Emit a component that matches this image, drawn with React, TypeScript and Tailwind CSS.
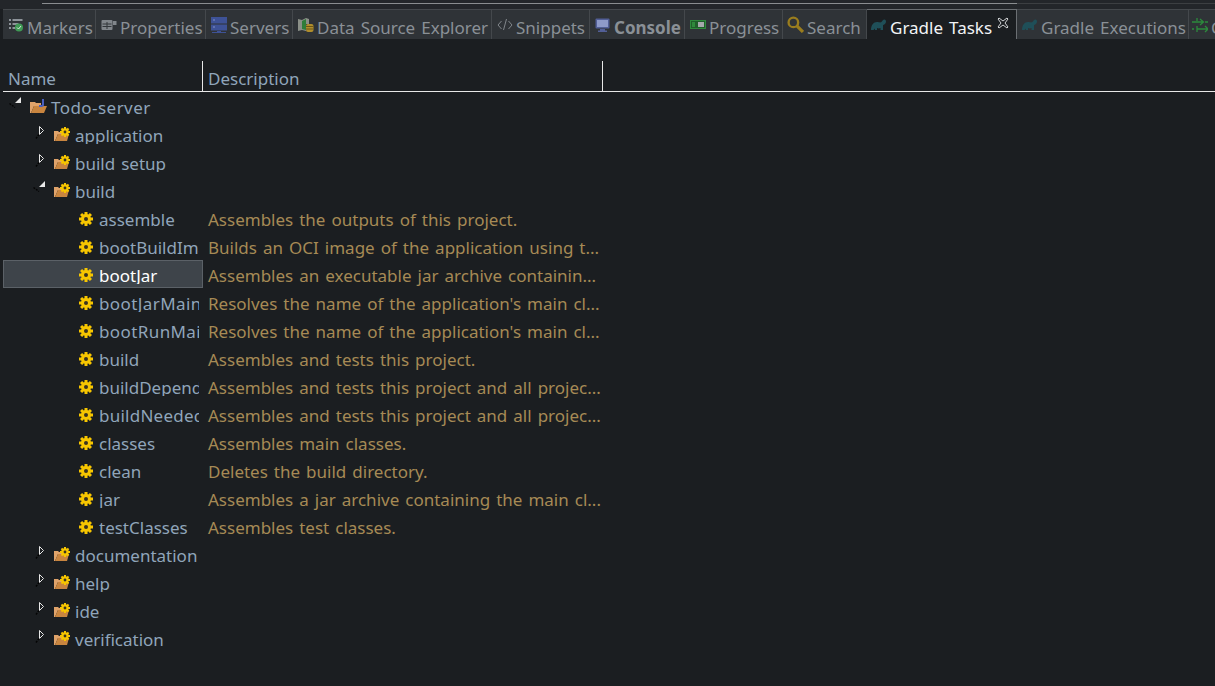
import React from "react";

const GRAY = "#8a9096";

function MarkersIcon() {
  return (
    <svg width="16" height="16" viewBox="0 0 16 16">
      <path d="M1 2h2v2H1zM1 6h2v2H1zM1 10h2v2H1z" fill="#8d9399" />
      <path d="M4.500 2h10v2h-10zM4.500 6h6v2h-6zM4.500 10h3v2h-3z" fill="#8d9399" />
      <circle cx="11" cy="10.500" r="4" fill="#3f9a55" />
      <path d="M9 10.500l1.500 1.500 2.500-3" stroke="#d8e8dc" strokeWidth="1" fill="none" />
    </svg>
  );
}

function PropertiesIcon() {
  return (
    <svg width="16" height="16" viewBox="0 0 16 16">
      <rect x="0.500" y="3" width="11" height="10" rx="1" fill="#81868b" />
      <path d="M1.500 7h9M6 5v7M1.500 9.500h9" stroke="#33373b" strokeWidth="1" />
      <path d="M12 4h3.500v4H12z" fill="#81868b" />
    </svg>
  );
}

function ServersIcon() {
  return (
    <svg width="16" height="16" viewBox="0 0 16 16">
      <rect x="0" y="0" width="16" height="6.500" fill="#3e5296" />
      <rect x="0" y="7.500" width="16" height="6" fill="#3e5296" />
      <path d="M2 3h2M2 10h2" stroke="#8090c8" strokeWidth="1" />
      <path d="M6 14h4v1h5v1H1v-1h5z" fill="#3e5296" />
    </svg>
  );
}

function DataSourceIcon() {
  return (
    <svg width="16" height="16" viewBox="0 0 16 16">
      <path d="M0 2l4 1 4-2 3 1v5H8v7l-4-1-4 1z" fill="#8b9088" />
      <path d="M4 4l4-2v11l-4-1z" fill="#2f7d3a" />
      <rect x="8" y="7" width="7.500" height="8" rx="2" fill="#b08e2c" />
      <path d="M8 9.500h7.500M8 12h7.500" stroke="#6b5518" strokeWidth="1" />
    </svg>
  );
}

function SnippetsIcon() {
  return (
    <svg width="16" height="14" viewBox="0 0 16 14" fill="none" stroke="#81868b" strokeWidth="1">
      <path d="M4.500 3L1 7l3.500 4M11.500 3L15 7l-3.500 4M9.500 1L6.500 12" />
    </svg>
  );
}

function ConsoleIcon() {
  return (
    <svg width="15" height="14" viewBox="0 0 15 14">
      <rect x="0.500" y="0.500" width="14" height="10" rx="1" fill="#525f97" />
      <rect x="2" y="2" width="11" height="7" fill="#8e9ac9" />
      <path d="M5 11h5v1.500h2V14H3v-1.500h2z" fill="#525f97" />
    </svg>
  );
}

function ProgressIcon() {
  return (
    <svg width="16" height="9" viewBox="0 0 16 9">
      <rect width="16" height="9" fill="#2f8a3c" />
      <rect x="1" y="1" width="14" height="7" fill="#1f5f2a" />
      <rect x="8" y="2" width="6" height="5" fill="#a5a8ab" />
      <rect x="2" y="2" width="3" height="5" fill="#2f8a3c" />
    </svg>
  );
}

function SearchIcon() {
  return (
    <svg width="17" height="17" viewBox="0 0 16 16" fill="none" stroke="#9a7d1e">
      <circle cx="6" cy="6" r="4.500" strokeWidth="2.200" />
      <path d="M9.500 9.500l5.500 5.500" strokeWidth="3" />
    </svg>
  );
}

function GradleIcon() {
  return (
    <svg width="15" height="12" viewBox="0 0 15 12" className="shrink-0">
      <path d="M0 11C0 6 2.500 3 6 3c2 0 3 1 4.500 0 .5-1 1.500-2.500 3-2.500 1 0 1.500 1 1.500 2 0 2-2 3.500-3 3.500v5H9.500V9c-1 .5-2.500.5-3.500 0v2H4V9.500L2.500 11z" fill="#1f4f58" />
    </svg>
  );
}

function ExecutionsIcon() {
  return (
    <svg width="16" height="16" viewBox="0 0 16 16" fill="none" stroke="#2c8a3c" strokeWidth="1.300" className="shrink-0">
      <path d="M0 5h11M8 2l3.500 3L8 8M16 5h-3M5 1v3M0 12h2M5 9v6M5 12h11M13 9l3 3-3 3" />
    </svg>
  );
}

function GearIcon({ size = 14 }: { size?: number }) {
  const teeth = [0, 45, 90, 135];
  return (
    <svg width={size} height={size} viewBox="0 0 14 14">
      {teeth.map((a) => (
        <rect key={a} x="5.500" y="0" width="3" height="14" fill="#f7c600" transform={`rotate(${a} 7 7)`} />
      ))}
      <circle cx="7" cy="7" r="5" fill="#f7c600" />
      <circle cx="7" cy="7" r="2" fill="#3a3320" />
    </svg>
  );
}

function ProjectFolder() {
  return (
    <svg width="17" height="15" viewBox="0 0 17 15" className="mb-[2px]">
      <path d="M0 3h5l1 1h5v3H4L1 14H0z" fill="#e0a36a" />
      <path d="M4 7h13l-3 7H1z" fill="#c9853f" />
      <path d="M12 0h2v6c0 1-1 2-2.500 2H9V6h3z" fill="#4a5fc0" />
    </svg>
  );
}

function GroupFolder() {
  return (
    <svg width="17" height="15" viewBox="0 0 17 15" className="mb-[2px]">
      <path d="M0 4h4l1 1h3v2H4l-3 7H0z" fill="#e0a36a" />
      <path d="M4 7h11l-2 7H1z" fill="#c9853f" />
      <g transform="translate(6 0)">
        <GearGroup />
      </g>
    </svg>
  );
}

function GearGroup() {
  return (
    <g>
      {[0, 45, 90, 135].map((a) => (
        <rect key={a} x="4" y="0" width="2" height="10" fill="#f7c600" transform={`rotate(${a} 5 5)`} />
      ))}
      <circle cx="5" cy="5" r="3.700" fill="#f7c600" />
      <circle cx="5" cy="5" r="1.400" fill="#3a3320" />
    </g>
  );
}

function Twisty({ open }: { open: boolean }) {
  if (open) {
    return (
      <svg width="12" height="11" viewBox="0 0 12 11" className="mb-[9px]">
        <path d="M12 0v6H6z" fill="#e8e8e8" />
        <path d="M0.500 6.500l5.500 4" stroke="#050505" strokeWidth="1.500" strokeDasharray="2 1" />
      </svg>
    );
  }
  return (
    <svg width="9" height="13" viewBox="0 0 9 13" className="mb-[5px]">
      <path d="M4.500 0.500l4 4-4 4z" fill="#1b1e21" stroke="#e8e8e8" />
      <path d="M4 8.500l-3 4" stroke="#050505" strokeWidth="1.500" strokeDasharray="2 1" />
    </svg>
  );
}

const tabs = [
  { label: "Markers", w: "w-[93px]", icon: <MarkersIcon /> },
  { label: "Properties", w: "w-[110px]", icon: <PropertiesIcon /> },
  { label: "Servers", w: "w-[87px]", icon: <ServersIcon /> },
  { label: "Data Source Explorer", w: "w-[199px]", icon: <DataSourceIcon /> },
  { label: "Snippets", w: "w-[98px]", icon: <SnippetsIcon /> },
  { label: "Console", w: "w-[95px]", icon: <ConsoleIcon />, bold: true },
  { label: "Progress", w: "w-[98px]", icon: <ProgressIcon /> },
  { label: "Search", w: "w-[84px]", icon: <SearchIcon /> },
];

const tasks = [
  ["assemble", "Assembles the outputs of this project.", ""],
  ["bootBuildImage", "Builds an OCI image of the application using t...", ""],
  ["bootJar", "Assembles an executable jar archive containin...", ""],
  ["bootJarMainClassName", "Resolves the name of the application's main cl...", "tracking-[0.4px]"],
  ["bootRunMainClassName", "Resolves the name of the application's main cl...", "tracking-[0.4px]"],
  ["build", "Assembles and tests this project.", ""],
  ["buildDependents", "Assembles and tests this project and all projec...", ""],
  ["buildNeeded", "Assembles and tests this project and all projec...", "tracking-[0.25px]"],
  ["classes", "Assembles main classes.", ""],
  ["clean", "Deletes the build directory.", ""],
  ["jar", "Assembles a jar archive containing the main cl...", ""],
  ["testClasses", "Assembles test classes.", ""],
];

function Group({ name, open = false }: { name: string; open?: boolean }) {
  return (
    <div className="flex h-7 items-center pt-[2px]">
      <div className="flex w-[200px] items-center overflow-hidden">
        <div className={open ? "flex w-[50px] justify-end pr-[8px]" : "flex w-[50px] justify-end pr-[9px]"}>
          <Twisty open={open} />
        </div>
        <div className="ml-[1px] flex w-[21px] shrink-0">
          <GroupFolder />
        </div>
        <span className="whitespace-nowrap">{name}</span>
      </div>
    </div>
  );
}

export default function App() {
  return (
    <div className="h-[686px] w-[1215px] overflow-hidden bg-[#1b1e21] pl-[3px] font-['Noto_Sans',sans-serif] text-[17px] leading-none text-[#90a5ba] [word-spacing:1.6px]">
      {/* top strip */}
      <div className="-ml-[3px] flex h-[9px] items-start bg-[#23262a] pt-[3px]">
        <div className="ml-[42px] h-px w-[975px] bg-[#8a8d90]" />
        <div className="h-px flex-1 bg-[#3c3f42]" />
      </div>

      {/* view tabs */}
      <div className="flex h-[30px] items-stretch border-t border-[#44484c] bg-[#2f3337]">
        {tabs.map((t) => (
          <div
            key={t.label}
            className={`flex ${t.w} shrink-0 items-center gap-[3px] border-r border-[#44484c] pl-[4px] whitespace-nowrap ${t.bold ? "font-bold" : ""}`}
            style={{ color: GRAY }}
          >
            <span className="flex w-[17px] shrink-0 items-center justify-center">{t.icon}</span>
            <span className="mt-[5px]">{t.label}</span>
          </div>
        ))}
        <div className="-mt-px flex w-[150px] shrink-0 items-center gap-[4px] border-t border-r border-[#6b6f73] bg-[#1b1e21] pl-[4px] whitespace-nowrap text-[#f2f4f6]">
          <GradleIcon />
          <span className="mt-[5px]">Gradle Tasks</span>
          <svg width="12" height="12" viewBox="0 0 12 12" className="-mt-1 ml-[1px]" fill="none" stroke="#d0d2d4">
            <path d="M2 1l4 3 4-3 1 1-3 4 3 4-1 1-4-3-4 3-1-1 3-4-3-4z" />
          </svg>
        </div>
        <div className="flex w-[172px] shrink-0 items-center gap-[4px] border-r border-[#44484c] pl-[5px] whitespace-nowrap" style={{ color: GRAY }}>
          <GradleIcon />
          <span className="mt-[5px]">Gradle Executions</span>
        </div>
        <div className="flex shrink-0 items-center gap-[3px] pl-[3px]" style={{ color: GRAY }}>
          <ExecutionsIcon />
          <span className="mt-[5px]">C</span>
        </div>
      </div>

      {/* column header */}
      <div className="mt-[22px] flex h-[31px] items-stretch border-b border-[#e8e8e8]">
        <div className="flex w-[200px] items-end border-r border-[#e8e8e8] pb-[4px] pl-[5px]">Name</div>
        <div className="flex w-[400px] items-end border-r border-[#e8e8e8] pb-[4px] pl-[5px]">Description</div>
      </div>

      {/* tree */}
      <div>
        <div className="flex h-7 items-center pt-[2px]">
          <div className="flex w-[18px] justify-end">
            <Twisty open />
          </div>
          <div className="ml-[9px] flex w-[21px] shrink-0">
            <ProjectFolder />
          </div>
          <span className="tracking-[0.45px]">Todo-server</span>
        </div>
        <Group name="application" />
        <Group name="build setup" />
        <Group name="build" open />
        {tasks.map(([name, desc, wide]) => {
          const selected = name === "bootJar";
          return (
            <div key={name} className="flex h-7 items-center">
              <div
                className={`flex h-7 w-[200px] items-center overflow-hidden pt-[2px] ${
                  selected ? "border border-[#5b6167] bg-[#3e444a] pl-[75px] text-white" : "pl-[76px]"
                }`}
              >
                <span className="flex w-[20px] shrink-0">
                  <GearIcon />
                </span>
                <span className={`w-[100px] shrink-0 overflow-hidden whitespace-nowrap ${wide}`}>{name}</span>
              </div>
              <span className="mt-[2px] pl-[5px] whitespace-nowrap text-[#a68a55]">{desc}</span>
            </div>
          );
        })}
        <Group name="documentation" />
        <Group name="help" />
        <Group name="ide" />
        <Group name="verification" />
      </div>
    </div>
  );
}
